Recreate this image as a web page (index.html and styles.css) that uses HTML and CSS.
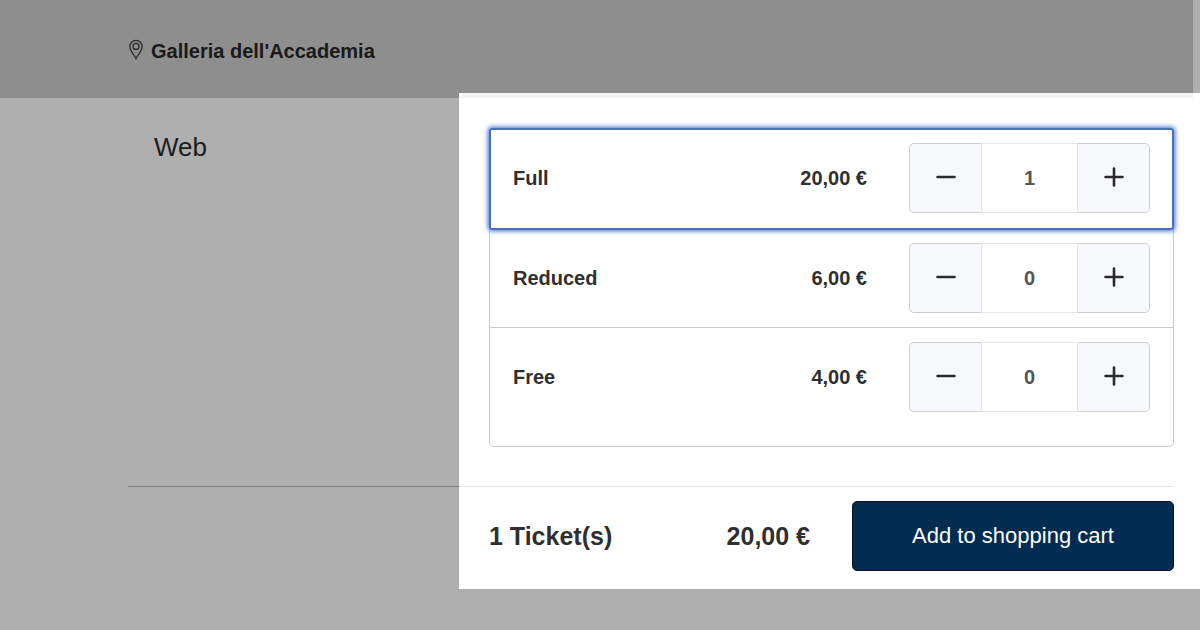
FILE: index.html
```html
<!DOCTYPE html>
<html lang="en">
	<head>
		<meta charset="UTF-8" />
		<meta name="viewport" content="width=device-width, initial-scale=1.0" />
		<title>Galleria dell'Accademia - Tickets</title>
		<link rel="stylesheet" href="styles.css">
	</head>
	<body>
		<header class="header">
			<svg class="pin" viewBox="0 0 16 22" width="16" height="22" aria-hidden="true">
				<path d="M8 19.600C6.800 16.600 1.800 12 1.800 7.600a6.200 6.200 0 0 1 12.400 0C14.200 12 9.200 16.600 8 19.600z" />
				<circle cx="8" cy="7.400" r="3" />
			</svg>
			<span class="venue">Galleria dell'Accademia</span>
		</header>
		<main class="content">
			<div class="channel">
				<h1 class="channel-name">Web</h1>
			</div>
			<form class="panel" id="ticketForm">
				<div class="panel-edge"></div>
				<div class="tickets">
					<div class="ticket-list">
						<div class="ticket active">
							<label class="ticket-name" for="full">Full</label>
							<span class="price">20,00 €</span>
							<div class="stepper">
								<button type="button" class="step" aria-label="Remove one full ticket">
									<svg viewBox="0 0 20 20" width="20" height="20"><path d="M1.500 10h17" /></svg>
								</button>
								<input type="text" inputmode="numeric" id="full" class="amount" value="1" />
								<button type="button" class="step" aria-label="Add one full ticket">
									<svg viewBox="0 0 20 20" width="20" height="20"><path d="M1.500 10h17M10 1.500v17" /></svg>
								</button>
							</div>
						</div>
						<div class="ticket">
							<label class="ticket-name" for="reduced">Reduced</label>
							<span class="price">6,00 €</span>
							<div class="stepper">
								<button type="button" class="step" aria-label="Remove one reduced ticket">
									<svg viewBox="0 0 20 20" width="20" height="20"><path d="M1.500 10h17" /></svg>
								</button>
								<input type="text" inputmode="numeric" id="reduced" class="amount" value="0" />
								<button type="button" class="step" aria-label="Add one reduced ticket">
									<svg viewBox="0 0 20 20" width="20" height="20"><path d="M1.500 10h17M10 1.500v17" /></svg>
								</button>
							</div>
						</div>
						<div class="ticket">
							<label class="ticket-name" for="free">Free</label>
							<span class="price">4,00 €</span>
							<div class="stepper">
								<button type="button" class="step" aria-label="Remove one free ticket">
									<svg viewBox="0 0 20 20" width="20" height="20"><path d="M1.500 10h17" /></svg>
								</button>
								<input type="text" inputmode="numeric" id="free" class="amount" value="0" />
								<button type="button" class="step" aria-label="Add one free ticket">
									<svg viewBox="0 0 20 20" width="20" height="20"><path d="M1.500 10h17M10 1.500v17" /></svg>
								</button>
							</div>
						</div>
					</div>
				</div>
			</form>
			<div class="summary">
				<span class="count">1 Ticket(s)</span>
				<span class="total">20,00 €</span>
				<button type="submit" form="ticketForm" class="add">Add to shopping cart</button>
			</div>
		</main>
	</body>
</html>
```

FILE: styles.css
```css
* {
	box-sizing: border-box;
}
body {
	margin: 0;
	font-family: "Liberation Sans", Arial, sans-serif;
	font-size: 20px;
	color: #2f2f2f;
	background-color: #afafaf;
}
.header {
	display: flex;
	align-items: flex-start;
	gap: 7px;
	margin-right: 7px;
	padding: 39px 128px 35px;
	line-height: 24px;
	background-color: #8e8e8e;
}
.pin {
	fill: none;
	stroke: #2b2b2b;
	stroke-width: 1.3;
}
.venue {
	font-weight: bold;
	color: #1a1a1a;
}
.content {
	display: grid;
	grid-template-columns: 38.25% 1fr;
}
.channel {
	margin-left: 128px;
	padding: 34px 26px;
	border-bottom: 1px solid #7c7c7c;
}
.channel-name {
	margin: 0;
	font-size: 26px;
	font-weight: normal;
	line-height: 30px;
	color: #1c1c1c;
}
/* The panel reaches up over the lower edge of the header */
.panel {
	margin-top: -5px;
	background-color: #fff;
}
.panel-edge {
	height: 5px;
	margin-right: 7px;
	background-color: #f4f4f4;
}
.tickets {
	margin-right: 26px;
	padding: 30px 0 39px 30px;
	border-bottom: 1px solid #e3e3e3;
}
.ticket-list {
	padding-bottom: 20px;
	border: 1px solid #cacaca;
	border-radius: 5px;
}
.ticket {
	display: flex;
	align-items: center;
	padding: 14px 23px;
	font-weight: bold;
	border-bottom: 1px solid #cacaca;
}
.ticket:last-child {
	border-bottom: none;
}
.ticket.active {
	margin: -1px;
	padding: 13px 22px 15px;
	border: 2px solid #4a6fbd;
	border-radius: 3px;
	box-shadow: 0 0 5px 1px #3d6ad0;
}
.ticket-name {
	flex: 1;
}
.price {
	margin-right: 42px;
}
.stepper {
	display: flex;
	width: 241px;
	height: 70px;
}
.step {
	display: flex;
	align-items: center;
	justify-content: center;
	width: 73px;
	padding: 0 0 2px;
	background-color: #f7f8fc;
	border: 1px solid #cfd0d2;
	cursor: pointer;
}
.step:first-child {
	border-right-color: #e2e2e4;
	border-radius: 5px 0 0 5px;
}
.step:last-child {
	border-left-color: #e2e2e4;
	border-radius: 0 5px 5px 0;
}
.step svg {
	fill: none;
	stroke: #2a2a2c;
	stroke-width: 2.6;
	stroke-linecap: round;
}
.amount {
	flex: 1;
	min-width: 0;
	padding: 0;
	font: inherit;
	text-align: center;
	color: #555;
	background-color: #fff;
	border: solid #e6e6e6;
	border-width: 1px 0;
}
.summary {
	grid-column: 2;
	display: flex;
	align-items: center;
	padding: 14px 26px 18px 30px;
	font-size: 25px;
	font-weight: bold;
	background-color: #fff;
}
.count {
	flex: 1;
}
.total {
	margin-right: 42px;
}
.add {
	width: 322px;
	height: 70px;
	font-family: inherit;
	font-size: 22px;
	color: #fff;
	background-color: #022c50;
	border: 1px solid #0c1218;
	border-radius: 5px;
	cursor: pointer;
}
```
